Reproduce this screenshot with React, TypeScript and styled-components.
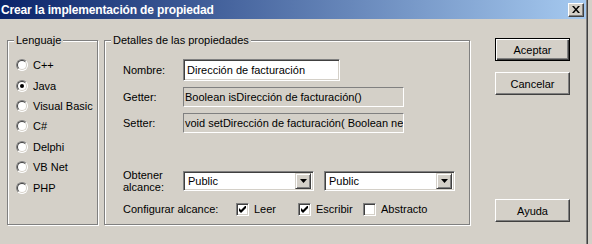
import styled, { createGlobalStyle } from "styled-components";

const GlobalStyle = createGlobalStyle`
  html, body {
    margin: 0;
    padding: 0;
    background: #d4d0c8;
  }
  body {
    font-family: "Liberation Sans", Arial, sans-serif;
    font-size: 11px;
    color: #000;
  }
`;

const Screen = styled.div`
  width: 592px;
  height: 244px;
  background: #d4d0c8;
  overflow: hidden;
`;

const Window = styled.div`
  width: 588px;
  height: 244px;
  box-shadow: inset -1px 0 0 #404040, inset -2px 0 0 #808080;
  display: flex;
  flex-direction: column;
`;

const TitleBar = styled.div`
  width: 586px;
  height: 19px;
  background: linear-gradient(to right, #0a246a, #a6caf0);
  display: flex;
  align-items: center;
  justify-content: space-between;
  padding: 0 2px 0 1px;
  box-sizing: border-box;
`;

const Title = styled.span`
  color: #fff;
  font-weight: bold;
  font-size: 12px;
  letter-spacing: -0.15px;
  white-space: nowrap;
`;

const CloseButton = styled.div`
  width: 16px;
  height: 14px;
  box-sizing: border-box;
  background: #d4d0c8;
  border: 1px solid;
  border-color: #fff #404040 #404040 #fff;
  box-shadow: inset -1px -1px 0 #808080;
  display: flex;
  align-items: center;
  justify-content: center;
`;

const Body = styled.div`
  flex: 1;
  display: flex;
  align-items: flex-start;
  padding: 15px 0 0 7px;
`;

const Group = styled.fieldset<{ $width: number; $left?: number }>`
  margin: 0 0 0 ${(p) => p.$left ?? 0}px;
  padding: 0;
  width: ${(p) => p.$width}px;
  height: 191px;
  box-sizing: border-box;
  border: 1px solid #808080;
  box-shadow: inset 1px 1px 0 #fff, 1px 1px 0 #fff;
  min-width: 0;
`;

const Legend = styled.legend`
  margin-left: 6px;
  padding: 0 2px;
  line-height: 13px;
  background: #d4d0c8;
`;

const RadioList = styled.div`
  display: flex;
  flex-direction: column;
  padding: 8px 0 0 8px;
`;

const RadioRow = styled.div`
  display: flex;
  align-items: center;
  height: 20.4px;
  gap: 5px;
`;

const RadioCircle = styled.span<{ $checked?: boolean }>`
  position: relative;
  width: 12px;
  height: 12px;
  box-sizing: border-box;
  border-radius: 50%;
  border: 1px solid;
  border-color: #808080 #fff #fff #808080;
  background: #fff;

  &::before {
    content: "";
    position: absolute;
    inset: 0;
    border-radius: 50%;
    border: 1px solid;
    border-color: #404040 #d4d0c8 #d4d0c8 #404040;
  }

  &::after {
    content: "";
    display: ${(p) => (p.$checked ? "block" : "none")};
    position: absolute;
    left: 3px;
    top: 3px;
    width: 4px;
    height: 4px;
    border-radius: 50%;
    background: #000;
  }
`;

const Details = styled.div`
  display: flex;
  flex-direction: column;
  padding: 12px 0 0 18px;
`;

const Row = styled.div<{ $top?: number; $height: number }>`
  display: flex;
  align-items: center;
  margin-top: ${(p) => p.$top ?? 0}px;
  height: ${(p) => p.$height}px;
`;

const Label = styled.span<{ $width: number }>`
  width: ${(p) => p.$width}px;
  flex-shrink: 0;
  line-height: 12px;
`;

const TextBox = styled.div<{ $width: number }>`
  width: ${(p) => p.$width}px;
  height: 22px;
  box-sizing: border-box;
  background: #fff;
  border: 1px solid;
  border-color: #808080 #fff #fff #808080;
  box-shadow: inset 1px 1px 0 #404040, inset -1px -1px 0 #d4d0c8;
  padding: 0 3px;
  display: flex;
  align-items: center;
  white-space: nowrap;
  overflow: hidden;
`;

const ReadOnlyBox = styled.div<{ $width: number }>`
  width: ${(p) => p.$width}px;
  height: 20px;
  box-sizing: border-box;
  background: #d4d0c8;
  border: 1px solid;
  border-color: #808080 #fff #fff #808080;
  padding: 0 1px;
  display: flex;
  align-items: center;
  white-space: nowrap;
  overflow: hidden;
`;

const Select = styled.div<{ $gap?: number }>`
  width: 131px;
  height: 20px;
  margin-left: ${(p) => p.$gap ?? 0}px;
  box-sizing: border-box;
  background: #fff;
  border: 1px solid;
  border-color: #808080 #fff #fff #808080;
  box-shadow: inset 1px 1px 0 #404040, inset -1px -1px 0 #d4d0c8;
  padding: 2px 2px 2px 4px;
  display: flex;
  align-items: center;
  justify-content: space-between;
`;

const DropButton = styled.div`
  width: 16px;
  height: 16px;
  box-sizing: border-box;
  background: #d4d0c8;
  border: 1px solid;
  border-color: #d4d0c8 #404040 #404040 #d4d0c8;
  box-shadow: inset 1px 1px 0 #fff, inset -1px -1px 0 #808080;
  display: flex;
  align-items: center;
  justify-content: center;
`;

const CheckItem = styled.div<{ $width?: number }>`
  display: flex;
  align-items: center;
  gap: 5px;
  width: ${(p) => (p.$width ? `${p.$width}px` : "auto")};
`;

const CheckBox = styled.span`
  width: 13px;
  height: 13px;
  box-sizing: border-box;
  background: #fff;
  border: 1px solid;
  border-color: #808080 #fff #fff #808080;
  box-shadow: inset 1px 1px 0 #404040, inset -1px -1px 0 #d4d0c8;
  display: flex;
  align-items: center;
  justify-content: center;
`;

const ButtonColumn = styled.div`
  display: flex;
  flex-direction: column;
  margin-left: 25px;
  padding-top: 4px;
  height: 188px;
  box-sizing: border-box;
`;

const Button = styled.button<{ $default?: boolean; $top?: number; $bottom?: boolean }>`
  width: 75px;
  height: 23px;
  margin: 0;
  margin-top: ${(p) => (p.$bottom ? "auto" : `${p.$top ?? 0}px`)};
  padding: 0;
  font: inherit;
  color: #000;
  background: #d4d0c8;
  box-sizing: border-box;
  border: 1px solid;
  border-color: ${(p) =>
    p.$default ? "#000" : "#fff #404040 #404040 #fff"};
  box-shadow: ${(p) =>
    p.$default
      ? "inset 1px 1px 0 #fff, inset -1px -1px 0 #404040, inset -2px -2px 0 #808080"
      : "inset -1px -1px 0 #808080"};
`;

const languages = ["C++", "Java", "Visual Basic", "C#", "Delphi", "VB Net", "PHP"];

const Arrow = () => (
  <svg width="7" height="4" viewBox="0 0 7 4">
    <path d="M0 0h7L3.5 4z" fill="#000" />
  </svg>
);

const Check = () => (
  <svg width="7" height="7" viewBox="0 0 7 7">
    <path d="M0 2v3l2 2 5-5V-1L2 4z" fill="#000" />
  </svg>
);

const App = () => {
  return (
    <>
      <GlobalStyle />
      <Screen>
        <Window>
          <TitleBar>
            <Title>Crear la implementación de propiedad</Title>
            <CloseButton>
              <svg width="8" height="7" viewBox="0 0 8 7">
                <path d="M0 0h2l2 2.5L6 0h2L5 3.5 8 7H6L4 4.5 2 7H0l3-3.5z" fill="#000" />
              </svg>
            </CloseButton>
          </TitleBar>
          <Body>
            <Group $width={91}>
              <Legend>Lenguaje</Legend>
              <RadioList>
                {languages.map((lang) => (
                  <RadioRow key={lang}>
                    <RadioCircle $checked={lang === "Java"} />
                    {lang}
                  </RadioRow>
                ))}
              </RadioList>
            </Group>
            <Group $width={366} $left={6}>
              <Legend>Detalles de las propiedades</Legend>
              <Details>
                <Row $height={22}>
                  <Label $width={60}>Nombre:</Label>
                  <TextBox $width={157}>Dirección de facturación</TextBox>
                </Row>
                <Row $top={6} $height={20}>
                  <Label $width={60}>Getter:</Label>
                  <ReadOnlyBox $width={221}>Boolean isDirección de facturación()</ReadOnlyBox>
                </Row>
                <Row $top={6} $height={20}>
                  <Label $width={60}>Setter:</Label>
                  <ReadOnlyBox $width={221}>void setDirección de facturación( Boolean ne</ReadOnlyBox>
                </Row>
                <Row $top={38} $height={20}>
                  <Label $width={60}>
                    Obtener
                    <br />
                    alcance:
                  </Label>
                  <Select>
                    Public
                    <DropButton>
                      <Arrow />
                    </DropButton>
                  </Select>
                  <Select $gap={10}>
                    Public
                    <DropButton>
                      <Arrow />
                    </DropButton>
                  </Select>
                </Row>
                <Row $top={10} $height={16}>
                  <Label $width={113}>Configurar alcance:</Label>
                  <CheckItem $width={62}>
                    <CheckBox>
                      <Check />
                    </CheckBox>
                    Leer
                  </CheckItem>
                  <CheckItem $width={65}>
                    <CheckBox>
                      <Check />
                    </CheckBox>
                    Escribir
                  </CheckItem>
                  <CheckItem>
                    <CheckBox />
                    Abstracto
                  </CheckItem>
                </Row>
              </Details>
            </Group>
            <ButtonColumn>
              <Button $default>Aceptar</Button>
              <Button $top={11}>Cancelar</Button>
              <Button $bottom>Ayuda</Button>
            </ButtonColumn>
          </Body>
        </Window>
      </Screen>
    </>
  );
};

export default App;
